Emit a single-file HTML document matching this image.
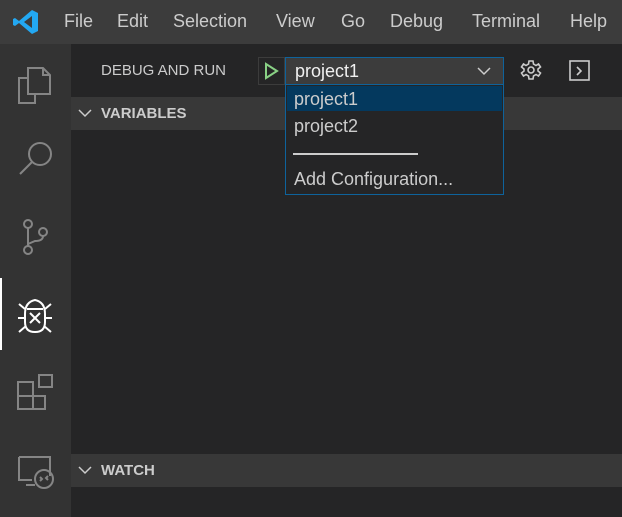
<!DOCTYPE html>
<html><head><style>
*{margin:0;padding:0;box-sizing:border-box}
body{width:622px;height:517px;background:#252526;font-family:"Segoe UI","Liberation Sans",sans-serif;position:relative;overflow:hidden;color:#ccc}
.abs{position:absolute}
#title{left:0;top:0;width:622px;height:44px;background:#3c3c3c}
.menu{top:11px;font-size:18px;color:#ccc}
#act{left:0;top:44px;width:71px;height:473px;background:#333}
.hdr{left:71px;width:551px;height:33px;background:#383838;font-weight:bold;font-size:15px;color:#ccc}
</style></head><body>
<div id="title" class="abs"></div>
<svg class="abs" style="left:13px;top:9px" width="26" height="26" viewBox="0 0 26 26"><path d="M19 1 L25 4 V22 L19 25 L6 14 L2 17 L0 16 V10 L2 9 L6 12 Z M19 7 L11 13 L19 19 Z" fill="#23a8f2"/></svg>
<div class="abs menu" style="left:64px">File</div>
<div class="abs menu" style="left:117px">Edit</div>
<div class="abs menu" style="left:173px">Selection</div>
<div class="abs menu" style="left:276px">View</div>
<div class="abs menu" style="left:341px">Go</div>
<div class="abs menu" style="left:390px">Debug</div>
<div class="abs menu" style="left:472px">Terminal</div>
<div class="abs menu" style="left:570px">Help</div>
<div id="act" class="abs"></div>
<div class="abs" style="left:0;top:278px;width:2px;height:72px;background:#fff"></div>
<svg class="abs" style="left:0;top:44px" width="71" height="473" viewBox="0 0 71 473" fill="none" stroke="#858585" stroke-width="2">
<path d="M28 24 H43 L50 31 V50 H35 V59 H19 V34 H28 Z M28 34 V50 H35 M43 24 V31 H50"/>
<circle cx="40" cy="110" r="11"/><path d="M32 118 L20 130"/>
<circle cx="28" cy="180" r="4"/><circle cx="28" cy="206" r="4"/><circle cx="43" cy="188" r="4"/><path d="M28 184 V202 M43 192 Q43 197 35 197 L28 200"/>
<g stroke="#fff"><path d="M25 270 Q25 258 35 256 Q45 258 45 270 V278 Q45 288 35 288 Q25 288 25 278 Z"/><path d="M30 269 L40 279 M40 269 L30 279 M25 265 L19 260 M45 265 L51 260 M25 274 H18 M45 274 H52 M26 282 L19 288 M44 282 L51 288 M27 265 H43"/></g>
<path d="M18 338 H33 V365 H18 Z M18 352 H45 V365 H33 M39 331 H52 V343 H39 Z"/>
<path d="M19 413 H50 V432 M19 413 V436 H32 M26 441 H35"/><circle cx="44" cy="435" r="9"/><path d="M40 433 L42 435 L40 437 M48 432 L46 434 L48 436"/>
</svg>
<div class="abs" style="left:101px;top:62px;font-size:15px;color:#ccc">DEBUG AND RUN</div>
<div class="abs" style="left:258px;top:57px;width:27px;height:28px;border:1px solid #3c3c3c"></div>
<svg class="abs" style="left:263px;top:62px" width="16" height="18"><path d="M3 2 L14 9 L3 16 Z" fill="none" stroke="#89d185" stroke-width="2"/></svg>
<div class="abs" style="left:285px;top:57px;width:219px;height:29px;background:#3c3c3c;border:1px solid #0e639c;border-bottom:none"></div>
<div class="abs" style="left:295px;top:61px;font-size:18px;color:#f0f0f0">project1</div>
<svg class="abs" style="left:477px;top:66px" width="14" height="10"><path d="M1 2 L7 8 L13 2" fill="none" stroke="#ccc" stroke-width="1.5"/></svg>
<svg class="abs" style="left:520px;top:59px" width="22" height="22" viewBox="0 0 22 22" fill="none" stroke="#ccc" stroke-width="1.6"><circle cx="11" cy="11" r="3"/><path d="M9 2 H13 L13.5 5 L16 6.5 L18.5 5 L20.5 8 L18 10 V12 L20.5 14 L18.5 17 L16 15.5 L13.5 17 L13 20 H9 L8.5 17 L6 15.5 L3.5 17 L1.5 14 L4 12 V10 L1.5 8 L3.5 5 L6 6.5 L8.5 5 Z"/></svg>
<svg class="abs" style="left:569px;top:60px" width="22" height="22" fill="none" stroke="#ccc" stroke-width="1.6"><rect x="1" y="1" width="19" height="19"/><path d="M8 7 L12 11 L8 15"/></svg>
<div class="abs hdr" style="top:97px"><svg class="abs" style="left:7px;top:11px" width="14" height="10"><path d="M1 2 L7 8 L13 2" fill="none" stroke="#ccc" stroke-width="1.5"/></svg><span class="abs" style="left:30px;top:8px">VARIABLES</span></div>
<div class="abs hdr" style="top:454px"><svg class="abs" style="left:7px;top:11px" width="14" height="10"><path d="M1 2 L7 8 L13 2" fill="none" stroke="#ccc" stroke-width="1.5"/></svg><span class="abs" style="left:30px;top:8px">WATCH</span></div>
<div class="abs" style="left:285px;top:84px;width:219px;height:111px;background:#252526;border:1px solid #0e639c"></div>
<div class="abs" style="left:287px;top:86px;width:215px;height:25px;background:#04395e"></div>
<div class="abs" style="left:294px;top:89px;font-size:18px;color:#ccc">project1</div>
<div class="abs" style="left:294px;top:116px;font-size:18px;color:#ccc">project2</div>
<div class="abs" style="left:293px;top:153px;width:125px;height:2px;background:#ccc"></div>
<div class="abs" style="left:294px;top:169px;font-size:18px;color:#ccc">Add Configuration...</div>
</body></html>
